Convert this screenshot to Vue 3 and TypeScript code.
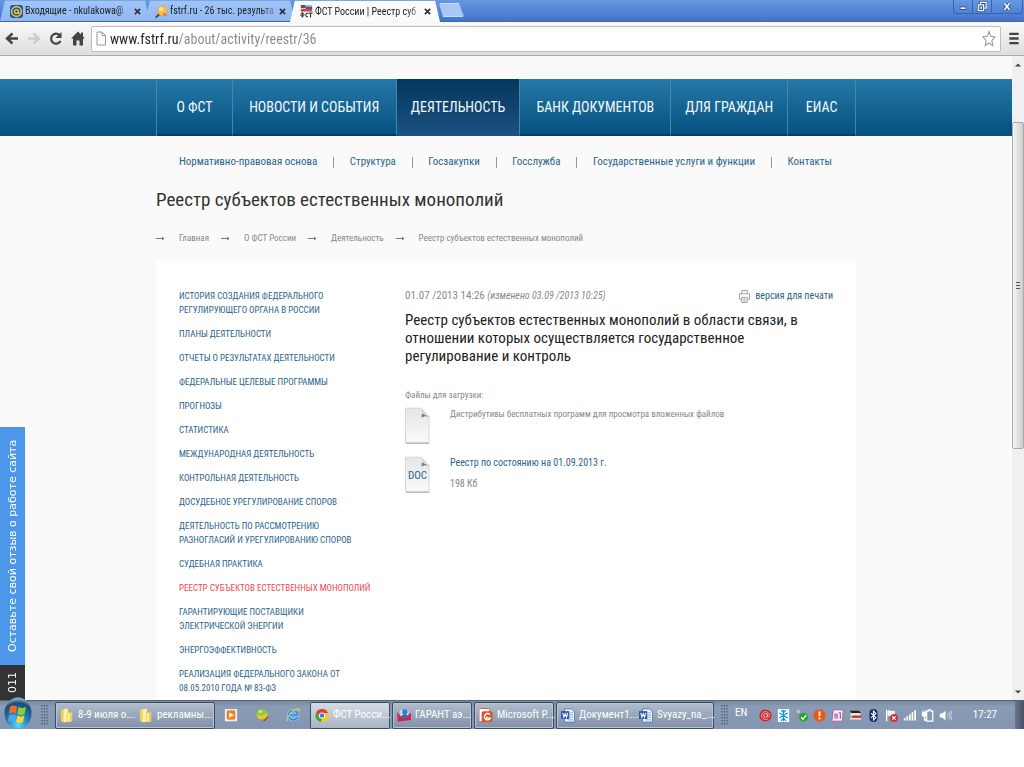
<script setup lang="ts">
import { ref } from 'vue'

interface Tab { title: string; icon: string; active?: boolean }
interface Task { title: string; icon: string; active?: boolean }

const address = ref('www.fstrf.ru/about/activity/reestr/36')

const tabs: Tab[] = [
  { title: 'Входящие - nkulakowa@', icon: 'mail' },
  { title: 'fstrf.ru - 26 тыс. результа', icon: 'search' },
  { title: 'ФСТ России | Реестр суб', icon: 'fst', active: true },
]

const mainNav = ['О ФСТ', 'НОВОСТИ И СОБЫТИЯ', 'ДЕЯТЕЛЬНОСТЬ', 'БАНК ДОКУМЕНТОВ', 'ДЛЯ ГРАЖДАН', 'ЕИАС']
const subNav = ['Нормативно-правовая основа', 'Структура', 'Госзакупки', 'Госслужба', 'Государственные услуги и функции', 'Контакты']
const crumbs = ['Главная', 'О ФСТ России', 'Деятельность', 'Реестр субъектов естественных монополий']

const sideMenu: string[][] = [
  ['ИСТОРИЯ СОЗДАНИЯ ФЕДЕРАЛЬНОГО', 'РЕГУЛИРУЮЩЕГО ОРГАНА В РОССИИ'],
  ['ПЛАНЫ ДЕЯТЕЛЬНОСТИ'],
  ['ОТЧЕТЫ О РЕЗУЛЬТАТАХ ДЕЯТЕЛЬНОСТИ'],
  ['ФЕДЕРАЛЬНЫЕ ЦЕЛЕВЫЕ ПРОГРАММЫ'],
  ['ПРОГНОЗЫ'],
  ['СТАТИСТИКА'],
  ['МЕЖДУНАРОДНАЯ ДЕЯТЕЛЬНОСТЬ'],
  ['КОНТРОЛЬНАЯ ДЕЯТЕЛЬНОСТЬ'],
  ['ДОСУДЕБНОЕ УРЕГУЛИРОВАНИЕ СПОРОВ'],
  ['ДЕЯТЕЛЬНОСТЬ ПО РАССМОТРЕНИЮ', 'РАЗНОГЛАСИЙ И УРЕГУЛИРОВАНИЮ СПОРОВ'],
  ['СУДЕБНАЯ ПРАКТИКА'],
  ['РЕЕСТР СУБЪЕКТОВ ЕСТЕСТВЕННЫХ МОНОПОЛИЙ'],
  ['ГАРАНТИРУЮЩИЕ ПОСТАВЩИКИ', 'ЭЛЕКТРИЧЕСКОЙ ЭНЕРГИИ'],
  ['ЭНЕРГОЭФФЕКТИВНОСТЬ'],
  ['РЕАЛИЗАЦИЯ ФЕДЕРАЛЬНОГО ЗАКОНА ОТ', '08.05.2010 ГОДА № 83-ФЗ'],
]
const currentItem = 11

const folderTasks: Task[] = [
  { title: '8-9 июля о...', icon: 'folder' },
  { title: 'рекламны...', icon: 'folder' },
]
const taskGroups: Task[][] = [
  [{ title: 'ФСТ Росси...', icon: 'chrome', active: true }],
  [{ title: 'ГАРАНТ аэ...', icon: 'garant' }],
  [{ title: 'Microsoft P...', icon: 'ppt' }],
  [{ title: 'Документ1...', icon: 'word' }, { title: 'Svyazy_na_...', icon: 'word' }],
]
const trayIcons = ['at', 'snow', 'safe', 'alert', 'note', 'drive', 'bt', 'flag', 'signal', 'power', 'sound']
</script>

<template>
  <div class="screen">
    <svg class="defs" aria-hidden="true">
      <defs>
        <linearGradient id="paper" x1="0" y1="0" x2="0" y2="1">
          <stop offset="0" stop-color="#e6e6e6" /><stop offset="1" stop-color="#fafafa" />
        </linearGradient>
        <radialGradient id="orb" cx="50%" cy="90%" r="90%">
          <stop offset="0" stop-color="#4fe0ff" /><stop offset="0.45" stop-color="#1f7fb8" /><stop offset="0.8" stop-color="#1d4a74" /><stop offset="1" stop-color="#9fc4dc" />
        </radialGradient>
      </defs>
      <symbol id="i-mail" viewBox="0 0 16 16">
        <rect x="0" y="0" width="16" height="16" rx="3" fill="#1f5a96" />
        <circle cx="8" cy="8" r="6" fill="none" stroke="#e9b73c" stroke-width="2" />
        <circle cx="8" cy="8" r="2.4" fill="none" stroke="#f3c94f" stroke-width="1.6" />
        <path d="M10.4 6v3.4c.3 1.3 1.8 1.3 2.6 0" fill="none" stroke="#f3c94f" stroke-width="1.4" />
      </symbol>
      <symbol id="i-search" viewBox="0 0 16 16">
        <path d="M1 15.500l5-5" stroke="#5c4030" stroke-width="2.400" />
        <circle cx="9" cy="7" r="5.800" fill="#ffbf3f" stroke="#f0a030" />
        <circle cx="7.500" cy="5" r="2.600" fill="#ffe59a" />
        <path d="M10 10l4 3" stroke="#e06a36" stroke-width="2" />
      </symbol>
      <symbol id="i-fst" viewBox="0 0 16 16">
        <rect x="1" y="0" width="6" height="4" fill="#555" /><rect x="7" y="0" width="8" height="2" fill="#bbb" />
        <rect x="7" y="2" width="8" height="3" fill="#375a9c" /><rect x="1" y="5" width="14" height="3" fill="#d23b3b" />
        <circle cx="3" cy="12" r="2" fill="none" stroke="#333" stroke-width="1.200" /><path d="M3 9v6.500M10 10.500c-3-1.500-4 4-1 4h1M10.500 10h5M13 10v5.500" fill="none" stroke="#333" stroke-width="1.300" />
      </symbol>
      <symbol id="i-folder" viewBox="0 0 16 16">
        <path d="M1 1h6v14H1z" fill="#e9cf60" /><path d="M4 1l5-1v15l-5 1z" fill="#fff0a0" /><path d="M8 5l6-1v11H8z" fill="#edcf5c" /><path d="M9 5h2v10H9z" fill="#fff3b4" />
      </symbol>
      <symbol id="i-chrome" viewBox="0 0 16 16">
        <circle cx="8" cy="8" r="7.500" fill="#f5c928" />
        <path d="M1.500 4.200A7.500 7.500 0 0 1 14.800 5H8a3 3 0 0 0-3 4.600z" fill="#e03c31" />
        <path d="M1.500 4.200L5.400 11 8 12 6.600 15.400A7.500 7.500 0 0 1 1.500 4.200z" fill="#3ca24a" />
        <circle cx="8" cy="8" r="3.400" fill="#fff" /><circle cx="8" cy="8" r="2.500" fill="#3f7fd8" />
      </symbol>
      <symbol id="i-garant" viewBox="0 0 16 16">
        <path d="M0 4l5 6 11-5v8L1 15z" fill="#cf2644" /><path d="M4 2h9v6l-5 3-4-3z" fill="#e8eefc" />
        <circle cx="9" cy="4" r="3.200" fill="#377fd0" /><path d="M4 9l4-3 5 2-5 4z" fill="#2f6fc0" />
      </symbol>
      <symbol id="i-ppt" viewBox="0 0 16 16">
        <rect x="0" y="0" width="12" height="15" rx="1" fill="#fff" stroke="#d3562b" /><rect x="3" y="3" width="12.500" height="12.500" rx="2" fill="#d9542b" />
        <path d="M12.500 7a3.600 3.600 0 1 0 .5 4H9V9" fill="none" stroke="#fff" stroke-width="1.600" />
      </symbol>
      <symbol id="i-word" viewBox="0 0 16 16">
        <path d="M4 .5h8l3.500 3.500v11.500H4z" fill="#f4f8ff" stroke="#4a74b4" /><path d="M10 5h4M10 7.500h4M10 10h4M7 13h7" stroke="#7b9bd0" />
        <rect x="0" y="3" width="9.500" height="9" fill="#2a5aa8" /><path d="M2 5l1.300 5L4.800 6l1.500 4L7.600 5" fill="none" stroke="#fff" stroke-width="1.200" />
      </symbol>
      <symbol id="i-player" viewBox="0 0 16 16">
        <rect x="1" y="1" width="14" height="14" rx="1" fill="#e8f2fb" /><rect x="3" y="2.500" width="10" height="11" rx="2" fill="#f08424" /><path d="M6 5l5 3-5 3z" fill="#fff" />
      </symbol>
      <symbol id="i-ball" viewBox="0 0 16 16">
        <path d="M3 10l8 5 5-5z" fill="#a63822" /><circle cx="8" cy="7.500" r="6.300" fill="#8ccc30" /><path d="M2 7c4 3 8 2 12-2v4c-3 3-8 5-11 2z" fill="#f6c034" /><circle cx="6" cy="4" r="2" fill="#c8ee70" />
      </symbol>
      <symbol id="i-ie" viewBox="0 0 16 16">
        <path d="M13 10.500A5.300 5.300 0 1 1 13.500 8H4.500" fill="none" stroke="#8cd4ff" stroke-width="3.400" /><path d="M13 10.500A5.300 5.300 0 1 1 13.500 8H4.500" fill="none" stroke="#2688d8" stroke-width="1.800" />
        <path d="M2 15C-1 11 9 1 14.500 1c2 .4 1 3 0 4" fill="none" stroke="#f2c548" stroke-width="1.200" />
      </symbol>
      <symbol id="i-at" viewBox="0 0 16 16">
        <circle cx="8" cy="8" r="7.500" fill="#c52d36" /><circle cx="8" cy="8" r="2.300" fill="none" stroke="#ffb3b3" stroke-width="1.200" /><path d="M10.300 5.500v4c1 1.500 2.500 0 2.500-1.500a4.800 4.800 0 1 0-2 4" fill="none" stroke="#ffb3b3" stroke-width="1.100" />
      </symbol>
      <symbol id="i-snow" viewBox="0 0 16 16">
        <rect x="1" width="14" height="16" fill="#f1faff" /><path d="M8 1v14M3 5l10 6M13 5l-10 6M5 1.500l3 3 3-3M5 14.500l3-3 3 3" fill="none" stroke="#1690d0" stroke-width="1.400" />
      </symbol>
      <symbol id="i-safe" viewBox="0 0 16 16">
        <circle cx="4" cy="3" r="2.300" fill="#b9c2c8" /><path d="M1 6h7v8H1z" fill="#8b979e" /><circle cx="10.500" cy="10" r="5.500" fill="#2aa239" /><path d="M7.500 10l2.300 2.500 4-5" fill="none" stroke="#fff" stroke-width="1.700" />
      </symbol>
      <symbol id="i-alert" viewBox="0 0 16 16">
        <circle cx="8" cy="8" r="7.700" fill="#e8591c" /><path d="M8 3v6M8 10.500v2.500" stroke="#fff" stroke-width="2.200" />
      </symbol>
      <symbol id="i-note" viewBox="0 0 16 16">
        <path d="M3 1h12l-1 14H1z" fill="#f8e8f5" stroke="#a05a94" /><path d="M5 12V6.500h2.500V12M9.500 4.500h2V12" fill="none" stroke="#a64a90" stroke-width="1.300" />
      </symbol>
      <symbol id="i-drive" viewBox="0 0 16 16">
        <path d="M1 2h11l3 3H3z" fill="#222" /><path d="M2 5h12v4H2z" fill="#eceae6" /><path d="M4 8h11v3H4z" fill="#c5352e" /><path d="M1 11h14v2H1z" fill="#efe6cc" />
      </symbol>
      <symbol id="i-bt" viewBox="0 0 16 16">
        <rect x="3" width="10" height="16" rx="5" fill="#12336e" /><path d="M5 5l6 5.500L8 13.500v-11L11 5.500 5 11" fill="none" stroke="#fff" stroke-width="1.300" />
      </symbol>
      <symbol id="i-flag" viewBox="0 0 16 16">
        <path d="M2 1v14" stroke="#fff" stroke-width="1.600" /><path d="M3 2c4-2 5 2 9 0v7c-4 2-5-2-9 0z" fill="#f2f2f2" /><circle cx="11" cy="11" r="4.800" fill="#d22f2f" /><path d="M9 9l4 4M13 9l-4 4" stroke="#fff" stroke-width="1.500" />
      </symbol>
      <symbol id="i-signal" viewBox="0 0 16 16">
        <path d="M1 11h2v3H1zM4.200 9h2v5h-2zM7.400 6.500h2V14h-2zM10.600 4h2v10h-2zM13.800 1.500H16V14h-2.200z" fill="#fff" />
      </symbol>
      <symbol id="i-power" viewBox="0 0 16 16">
        <path d="M7 2.500h2V1h3v1.500h2.500V15H7z" fill="none" stroke="#fff" stroke-width="1.500" /><path d="M1.500 4v4c0 2 5 2 5 0V4zM2.500 1.500V4M5.500 1.500V4M4 9v5h3" fill="#fff" stroke="#fff" />
      </symbol>
      <symbol id="i-sound" viewBox="0 0 16 16">
        <path d="M1 5.500h3L8 2v12l-4-3.500H1z" fill="#fff" /><path d="M10 5.500c1.300 1.500 1.300 3.500 0 5M12 3.500c2.300 2.600 2.300 6.400 0 9M14 2c3 4 3 8 0 12" fill="none" stroke="#e9eff7" />
      </symbol>
      <symbol id="i-grip" viewBox="0 0 7 20">
        <path d="M1 0v20M3.500 0v20M6 0v20" stroke="#4c5a70" stroke-width="1.200" stroke-dasharray="1.500 1.500" />
      </symbol>
      <symbol id="i-file" viewBox="0 0 26 38">
        <path d="M1 36.500h24" stroke="#aaa" stroke-width="2" /><path d="M.5.500h16L25 9v27H.5z" fill="url(#paper)" stroke="#d5d5d5" />
        <path d="M17.500 6c0 2 0 3-.5 4.500 3-2 5-2 8-1z" fill="#777" /><path d="M16.500.5c2 3 2 4 1.500 6 3-.5 5 .5 7 2.500z" fill="#d0d0d0" />
      </symbol>
    </svg>

    <header class="browser">
      <div class="tab-strip">
        <div v-for="tab in tabs" :key="tab.title" class="tab" :class="{ active: tab.active }">
          <svg class="tab-icon"><use :href="'#i-' + tab.icon" /></svg>
          <span class="tab-title">{{ tab.title }}</span>
          <button class="tab-close" aria-label="Закрыть вкладку"><svg viewBox="0 0 8 8"><path d="M1 1l6 6M7 1L1 7" /></svg></button>
        </div>
        <button class="new-tab" aria-label="Новая вкладка"></button>
        <div class="window-buttons">
          <button aria-label="Свернуть"><svg viewBox="0 0 12 12"><path d="M2 8h8" stroke="#294b90" stroke-width="4" /><path d="M3 8h6" stroke="#fff" stroke-width="2" /></svg></button>
          <button aria-label="Развернуть"><svg viewBox="0 0 12 12"><path d="M4 3V1h7v7H9M1 4h7v7H1z" stroke="#294b90" stroke-width="3" /><path d="M4 3V1h7v7H9M1.500 4h6.500v7H1.500z" stroke="#fff" stroke-width="1.400" /><path d="M4 7.500h2" stroke="#fff" stroke-width="1.500" /></svg></button>
          <button class="wide" aria-label="Закрыть"><svg viewBox="0 0 12 12"><path d="M3 2l6 8M9 2L3 10" stroke="#294b90" stroke-width="4" /><path d="M3 2l6 8M9 2L3 10" stroke="#fff" stroke-width="2" /></svg></button>
        </div>
      </div>
      <div class="toolbar">
        <button aria-label="Назад"><svg viewBox="0 0 14 14"><path d="M13 7H3M7.500 2L2 7l5.500 5" stroke="#444" stroke-width="2.400" /></svg></button>
        <button aria-label="Вперёд"><svg viewBox="0 0 14 14"><path d="M1 7h10M6.500 2L12 7l-5.500 5" stroke="#ccc" stroke-width="2.400" /></svg></button>
        <button aria-label="Обновить"><svg viewBox="0 0 14 14"><path d="M11.500 9.500A5 5 0 1 1 10.500 3.500" stroke="#444" stroke-width="2.200" /><path d="M12.500.5v6h-6z" fill="#444" /></svg></button>
        <button aria-label="Домой"><svg viewBox="0 0 14 14"><path d="M7 0l7 7h-2v7H8.500V9h-3v5H2V7H0z" fill="#444" /><path d="M10 1h2v4h-2z" fill="#444" /></svg></button>
        <div class="address">
          <svg class="page-icon" viewBox="0 0 10 14"><path d="M1 .5h5L9.500 4v9.500H1zM6 .5V4h3.500" fill="#fff" stroke="#999" /></svg>
          <input v-model="address" type="text" aria-label="Адрес" />
          <button class="star" aria-label="В закладки"><svg viewBox="0 0 16 18"><path d="M8 1l2 5.500 5 .7-3.700 4 1 5.800L8 14l-4.300 3 1-5.800L1 7.200l5-.7z" fill="#fff" stroke="#999" stroke-width="1.200" /></svg></button>
        </div>
        <button class="menu" aria-label="Меню"><svg viewBox="0 0 10 14"><path d="M0 2h10M0 7h10M0 12h10" stroke="#444" stroke-width="2.600" /></svg></button>
      </div>
    </header>

    <div class="viewport">
      <div class="page">
        <nav class="main-nav" aria-label="Основное меню">
          <div class="main-nav-inner">
            <a v-for="item in mainNav" :key="item" href="#" :class="{ current: item === 'ДЕЯТЕЛЬНОСТЬ' }">{{ item }}</a>
          </div>
        </nav>
        <div class="wrap">
          <nav class="sub-nav" aria-label="Разделы">
            <template v-for="(item, i) in subNav" :key="item">
              <span v-if="i > 0" class="sep"></span>
              <a href="#">{{ item }}</a>
            </template>
          </nav>
          <h1>Реестр субъектов естественных монополий</h1>
          <nav class="crumbs" aria-label="Навигация">
            <span v-for="item in crumbs" :key="item" class="crumb">
              <svg viewBox="0 0 9 7"><path d="M0 3.500h8M6 2l2 1.500L6 5" /></svg>
              <a href="#">{{ item }}</a>
            </span>
          </nav>
          <div class="panel">
            <ul class="side-menu">
              <li v-for="(lines, i) in sideMenu" :key="i">
                <a href="#" :class="{ current: i === currentItem }"><span v-for="line in lines" :key="line">{{ line }}</span></a>
              </li>
            </ul>
            <main class="article">
              <div class="meta">
                <span class="date">01.07 /2013 14:26 <em>(изменено 03.09 /2013 10:25)</em></span>
                <a href="#" class="print">
                  <svg viewBox="0 0 12 14"><path d="M3 4V.5h6V4M3 10H.5V4h11v6H9M3 8h6v5.500H3zM4.500 10h3M4.500 12h3" fill="none" stroke="#999" /></svg>
                  версия для печати
                </a>
              </div>
              <h2>Реестр субъектов естественных монополий в области связи, в отношении которых осуществляется государственное регулирование и контроль</h2>
              <p class="files-label">Файлы для загрузки:</p>
              <div class="file">
                <svg class="file-icon"><use href="#i-file" /></svg>
                <div class="file-text"><span class="note">Дистрибутивы бесплатных программ для просмотра вложенных файлов</span></div>
              </div>
              <div class="file">
                <div class="file-icon doc"><svg><use href="#i-file" /></svg><span>DOC</span></div>
                <div class="file-text"><a href="#">Реестр по состоянию на 01.09.2013 г.</a><span>198 Кб</span></div>
              </div>
            </main>
          </div>
        </div>
      </div>
      <div class="scrollbar" aria-hidden="true">
        <svg class="arrow" viewBox="0 0 8 8"><path d="M0 6l4-4 4 4z" /></svg>
        <div class="track"><div class="thumb"><i></i></div></div>
        <svg class="arrow" viewBox="0 0 8 8"><path d="M0 2l4 4 4-4z" /></svg>
      </div>
      <div class="feedback">
        <a href="#" class="feedback-link">Оставьте свой отзыв о работе сайта</a>
        <span class="feedback-count">011</span>
      </div>
    </div>

    <footer class="taskbar">
      <button class="start" aria-label="Пуск">
        <svg viewBox="0 0 28 32">
          <ellipse cx="14" cy="16" rx="13.500" ry="15.500" fill="url(#orb)" />
          <path d="M6 10c2-2 4-2 7-.5l-1 7c-3-1.500-4.500-1-7 .5z" fill="#f26a2c" /><path d="M14.500 10c3 1.500 5 1.500 7.500 0l-1.500 7c-2.500 1.500-4 1.500-7 0z" fill="#8fcf3c" />
          <path d="M5 18.500c2.500-1.500 4-1.500 7-.5l-1.200 7c-2.500-1.500-4.500-1.500-7 0z" fill="#49a8f0" /><path d="M13.400 18.500c3 1.500 4.600 1.500 7 0L19 25c-2.500 1.500-4 1.500-7 0z" fill="#fbd13c" />
        </svg>
      </button>
      <svg class="grip"><use href="#i-grip" /></svg>
      <div class="task-group">
        <button v-for="task in folderTasks" :key="task.title" class="task"><svg><use :href="'#i-' + task.icon" /></svg><span>{{ task.title }}</span></button>
      </div>
      <div class="quick">
        <button aria-label="Проигрыватель"><svg><use href="#i-player" /></svg></button>
        <button aria-label="Агент"><svg><use href="#i-ball" /></svg></button>
        <button aria-label="Internet Explorer"><svg><use href="#i-ie" /></svg></button>
      </div>
      <div class="groups">
        <div v-for="(group, i) in taskGroups" :key="i" class="task-group">
          <button v-for="task in group" :key="task.title" class="task" :class="{ active: task.active }"><svg><use :href="'#i-' + task.icon" /></svg><span>{{ task.title }}</span></button>
        </div>
      </div>
      <svg class="grip tray-grip"><use href="#i-grip" /></svg>
      <span class="lang">EN</span>
      <div class="tray"><svg v-for="icon in trayIcons" :key="icon"><use :href="'#i-' + icon" /></svg></div>
      <time class="clock">17:27</time>
      <button class="show-desktop" aria-label="Свернуть все окна"></button>
    </footer>
  </div>
</template>

<style>
body { background: #fff; }
</style>

<style scoped>
.screen { font-family: "Roboto Condensed", Roboto, "Liberation Sans", sans-serif; color: #333; overflow: hidden; }
.screen * { box-sizing: border-box; }
.defs { position: absolute; width: 0; height: 0; }
svg { display: block; fill: none; flex: none; }
button { border: 0; padding: 0; margin: 0; background: none; font: inherit; color: inherit; display: flex; align-items: center; justify-content: center; flex: none; }
a { text-decoration: none; color: #2b648c; }

.tab-strip { display: flex; align-items: flex-end; height: 22px; background: linear-gradient(#6798e3, #4374cb); border-bottom: 1px solid #46659f; }
.tab { display: flex; align-items: center; width: 150px; height: 21px; padding: 0 7px 0 10px; margin-right: -5px; background: linear-gradient(#9fc5f8, #8fb8f4); clip-path: polygon(5px 0, 145px 0, 150px 100%, 0 100%); border-top: 1px solid #7fa7df; }
.tab.active { background: #fafafa; height: 22px; margin-bottom: -1px; z-index: 1; }
.tab-icon { width: 13px; height: 15px; }
.tab-title { font-size: 10px; line-height: 20px; flex: 1; min-width: 0; margin-left: 2px; white-space: nowrap; color: #222; mask-image: linear-gradient(90deg, #000 88%, #0005); }
.tab-close { width: 12px; height: 12px; margin-left: 2px; }
.tab-close svg { width: 7px; height: 7px; stroke: #333; stroke-width: 2; }
.new-tab { width: 25px; height: 14px; margin: 0 0 4px 4px; background: #a9c8f5; border: 1px solid #c6dcfa; border-radius: 2px; clip-path: polygon(0 0, 80% 0, 100% 100%, 16% 100%); }
.window-buttons { display: flex; align-self: flex-start; margin-left: auto; margin-right: 1px; border: 1px solid #3b62ad; border-top: 0; border-radius: 0 0 4px 4px; }
.window-buttons button { width: 19px; height: 13px; border-right: 1px solid #3b62ad; }
.window-buttons .wide { width: 30px; border: 0; }
.window-buttons svg { width: 10px; height: 11px; }

.toolbar { display: flex; align-items: center; gap: 8px; height: 34px; padding: 0 5px; background: linear-gradient(#f9f9f9, #dedede); border-bottom: 1px solid #aaa; }
.toolbar > button svg { width: 14px; height: 15px; }
.address { display: flex; flex: 1; align-items: center; height: 26px; padding: 0 4px 0 4px; border: 1px solid #bdbdbd; border-radius: 2px; background: #fff; }
.toolbar .address { margin-left: -2px; }
.page-icon { width: 10px; height: 15px; }
.address input { flex: 1; min-width: 0; padding: 0; margin-left: 4px; border: 0; outline: 0; font-family: inherit; font-size: 13px; line-height: 20px; color: transparent; background: linear-gradient(90deg, #222 64px, #888 64px); -webkit-background-clip: text; background-clip: text; }
.address input { font-size: 14px; background-image: linear-gradient(90deg, #222 69px, #888 69px); }
.star svg { width: 14px; height: 17px; }
.toolbar .menu svg { width: 10px; height: 13px; }

.viewport { position: relative; display: flex; background: #fafafa; }
.page { flex: 1; min-width: 0; padding-top: 23px; }
.main-nav { background: linear-gradient(#2679a8, #04507f); }
.main-nav-inner { display: grid; grid-template-columns: 76fr 164fr 124fr 151fr 117fr 68fr; max-width: 700px; margin: 0 auto; border-left: 1px solid #4187b0; }
.main-nav a { display: flex; align-items: center; justify-content: center; height: 57px; border-right: 1px solid #4187b0; border-bottom: 2px solid #063c63; color: #f4f9fc; font-size: 14px; line-height: 20px; white-space: nowrap; }
.main-nav .current { background: linear-gradient(#04375e, #1b5180); border-bottom-color: #1b5180; }
.wrap { max-width: 700px; margin: 0 auto; }
.sub-nav { display: flex; align-items: center; justify-content: space-between; padding: 18px 24px 0 23px; font-size: 11px; line-height: 16px; white-space: nowrap; }
.sep { flex: none; width: 1px; height: 11px; background: #999; }
h1 { margin: 18px 0 0; font-size: 19px; line-height: 24px; font-weight: 400; }
.crumbs { display: flex; align-items: center; gap: 12px; margin-top: 19px; font-size: 9px; line-height: 14px; white-space: nowrap; }
.crumb { display: flex; align-items: center; gap: 14px; }
.crumbs a { color: #888; }
.crumbs svg { width: 9px; height: 7px; stroke: #777; }
.panel { display: flex; margin-top: 16px; padding: 28px 23px 5px; background: #fff; }
.side-menu { display: flex; flex-direction: column; gap: 10px; width: 226px; margin: 0; padding: 0; list-style: none; font-size: 9px; line-height: 14px; white-space: nowrap; }
.side-menu a span { display: block; }
.side-menu .current { color: #f0494c; }
.article { flex: 1; min-width: 0; font-size: 10px; line-height: 14px; color: #888; }
.meta { display: flex; justify-content: space-between; }
.date { font-size: 11px; }
.date em { font-size: 10px; }
.print { display: flex; align-items: center; gap: 5px; }
.print svg { width: 11px; height: 13px; }
h2 { margin: 8px 0 0; font-size: 15px; line-height: 18px; font-weight: 400; color: #222; }
.files-label { margin: 23px 0 5px; font-size: 9px; }
.note { font-size: 9px; }
.file { display: flex; gap: 20px; margin-bottom: 11px; }
.file-icon, .file-icon svg { width: 25px; height: 38px; }
.file-icon.doc { position: relative; }
.doc span { position: absolute; left: 0; right: 0; top: 13px; text-align: center; color: #2b648c; font-size: 11px; }
.file-text { display: flex; flex-direction: column; gap: 7px; }

.scrollbar { display: flex; flex-direction: column; align-items: center; gap: 4px; width: 12px; padding: 6px 0 5px; background: #f0f0f0; }
.arrow { width: 6px; height: 6px; fill: #444; }
.track { flex: 1; width: 100%; padding-top: 50px; }
.thumb { display: flex; align-items: center; justify-content: center; height: 58%; border: 1px solid #aaa; border-radius: 2px; background: linear-gradient(90deg, #f6f6f6, #ccc); }
.thumb i { width: 4px; height: 7px; background: repeating-linear-gradient(#555 0 1px, transparent 1px 3px); }
.feedback { position: absolute; left: 0; bottom: 0; width: 25px; font: 11px/24px "DejaVu Sans", sans-serif; color: #fff; }
.feedback-link, .feedback-count { display: flex; align-items: center; justify-content: center; writing-mode: vertical-rl; transform: rotate(180deg); width: 25px; }
.feedback-link { height: 238px; background: #4c97ea; color: #fff; }
.feedback-count { height: 35px; background: #333; }

.taskbar { position: relative; display: flex; align-items: center; height: 29px; background: linear-gradient(#76879f, #8a9bb5 20%, #8495b0); border-top: 1px solid #56647a; font-size: 11px; line-height: 14px; color: #fff; white-space: nowrap; }
.start { width: 28px; height: 28px; margin-left: 4px; align-items: flex-end; overflow: visible; }
.start svg { width: 28px; height: 32px; }
.grip { width: 7px; height: 20px; margin-left: 9px; }
.task-group { display: flex; margin-left: 7px; height: 27px; border: 1px solid #3d4b61; border-radius: 2px; background: linear-gradient(#b1bdcd, #8090a9); box-shadow: inset 0 0 0 1px #b8c4d4; }
.task { width: 79px; padding: 0 4px; gap: 4px; justify-content: flex-start; }
.task svg { width: 14px; height: 15px; }
.task.active { background: linear-gradient(#d5dbe3, #a9b4c4); }
.quick { display: flex; gap: 17px; margin: 0 10px 0 9px; }
.quick button { width: 14px; height: 18px; }
.quick svg { width: 14px; height: 16px; }
.groups { display: flex; gap: 2px; }
.groups .task-group { margin-left: 0; }
.groups .task { width: 78px; }
.tray-grip { margin-left: 7px; }
.lang { margin: 0 12px 4px 7px; }
.tray { display: flex; gap: 5px; }
.tray svg { width: 13px; height: 15px; }
.clock { margin-left: auto; }
.show-desktop { width: 9px; height: 28px; margin-left: 18px; background: linear-gradient(90deg, #68758a, #465267); }
</style>
